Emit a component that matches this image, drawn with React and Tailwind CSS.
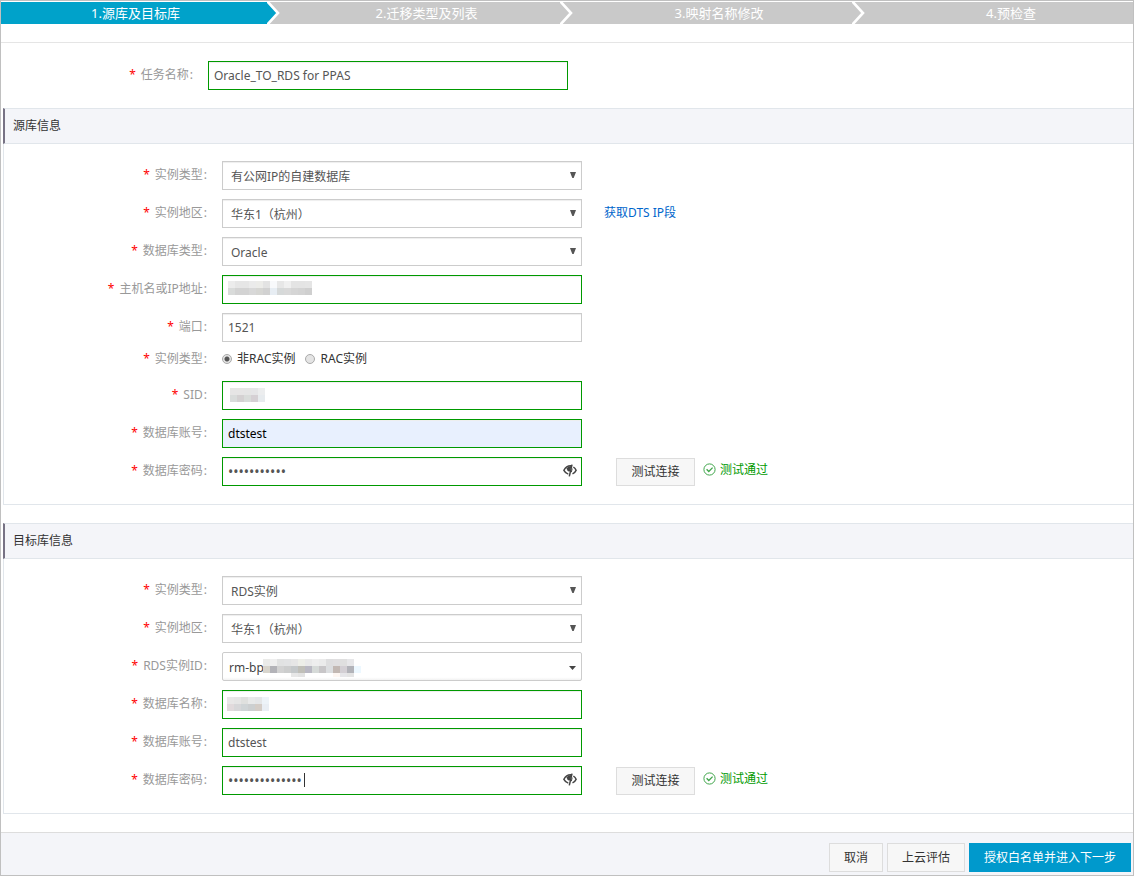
import React from "react";

const steps = [
  { label: "1.源库及目标库", cell: "bg-[#00a2ca] pr-2.5", arrow: "#00a2ca" },
  { label: "2.迁移类型及列表", cell: "bg-[#c9c9c9]", arrow: "#c9c9c9" },
  { label: "3.映射名称修改", cell: "bg-[#c9c9c9]", arrow: "#c9c9c9" },
  { label: "4.预检查", cell: "bg-[#c9c9c9] pl-6" },
];

const hostMask = [
  ["#ececec", "#e6e6e6", "#e6e6e6", "#ebebeb", "#ecece9", "#e3e3e3", "#f8f9fb", "#e7e7e7", "#f0f0f0", "#e4e4e4", "#e4e4e4", "#e5e5e5"],
  ["#d9dbda", "#d3d3d3", "#d3d3d3", "#d8d8d8", "#d6d6d3", "#d1d1d1", "#e7edf3", "#d6d9d9", "#d9d9d9", "#d5d5d5", "#d3d3d3", "#cfcfcf"],
];

const sidMask = [
  ["#e6e5e5", "#e6e5e5", "#e5e5e5", "#e5e5e7", "#ecedee"],
  ["#d9dcdb", "#d4d1d2", "#d9dcda", "#d5d0d4", "#e7ebee"],
];

const rdsMask = [
  ["#ebebe9", "#efefef", "#e1e2e2", "#e2e3e4", "#e6e6e6", "#edeee8", "#e9e9e9", "#eeeeee", "#ebebeb", "#dededf", "#e0dfe0", "#dfdfdf", "#e7e7e9", "transparent"],
  ["#d8d5cd", "#b3b3b8", "#d2d2d2", "#cccdcd", "#c4c8ca", "#c0bfb8", "#b9b8c3", "#d6dad8", "#c8c6c8", "#dcdee0", "#c2b8b3", "#d3cfd4", "#b2b3b9", "#edf8ff"],
  ["transparent", "transparent", "transparent", "transparent", "#e7e7e7", "#e3e3e3", "transparent", "transparent", "transparent", "transparent", "#fdf6f2", "#e6e6e9", "#e4e4e4", "transparent"],
];

const nameMask = [
  ["#e8e7e7", "#e5e5e5", "#dfe0de", "#e8e9e9", "#e4e6e8", "#edf3f8"],
  ["#e1dadc", "#d7d7d9", "#cfd4d6", "#cccfd0", "#d4cdc7", "#e9eef4"],
];

function Mask({ rows, className }) {
  return (
    <div className={`absolute pointer-events-none ${className}`}>
      {rows.map((row, i) => (
        <div key={i} className="flex">
          {row.map((color, j) => (
            <span key={j} className={i === 2 ? "w-[7px] h-1" : "w-[7px] h-[7px]"} style={{ backgroundColor: color }} />
          ))}
        </div>
      ))}
    </div>
  );
}

function EyeIcon() {
  return (
    <svg width="14" height="13" viewBox="0 0 14 13" fill="none" stroke="#444" aria-hidden="true">
      <path d="M8.6 1.8C5 1.4 2.3 3.6.9 6.3c.9 1.7 2.4 3.2 4.4 3.8" strokeWidth="1.5" />
      <path d="M3 5.2C4.4 3 6.2 2 8.6 2L6.8 7.4C5 7.8 4 6.8 4 5z" fill="#444" stroke="none" />
      <path d="M9 .6 6.3 12.4" strokeWidth="1.5" />
      <path d="M8.3 8.2 9.2 4.6" strokeWidth="1" />
      <path d="M10.4 3c1.2.8 2.1 1.9 2.7 3.3-.8 1.6-1.9 2.8-3.6 3.6" strokeWidth="1.5" />
    </svg>
  );
}

function PassIcon() {
  return (
    <svg width="13" height="13" viewBox="0 0 13 13" fill="none" stroke="#3fa54a" aria-hidden="true">
      <circle cx="6.5" cy="6.5" r="5.6" />
      <path d="M3.6 6.3 5.8 8.5 9.6 4.6" strokeWidth="1.3" />
    </svg>
  );
}

function LabelText({ children }) {
  return (
    <>
      <span className="mr-[5px] text-[#ff0000]">*</span>
      {children}
      <span className="pl-px pr-px">:</span>
    </>
  );
}

function RowLabel({ id, children, width = "w-[204px]" }) {
  return (
    <label htmlFor={id} className={`${width} shrink-0 pb-0.5 text-right text-[#999]`}>
      <LabelText>{children}</LabelText>
    </label>
  );
}

function Row({ id, label, children, extra }) {
  return (
    <div className="flex items-center">
      <RowLabel id={id}>{label}</RowLabel>
      <div className="relative ml-3.5 w-[360px]">{children}</div>
      {extra}
    </div>
  );
}

function TextField({ id, tone = "border-[#090]", fill = "bg-white text-[#555]", size = "text-xs", ...props }) {
  return (
    <input
      id={id}
      className={`block h-[29px] w-full border px-[5px] outline-none shadow-[inset_0_1px_1px_#eee] ${tone} ${fill} ${size}`}
      {...props}
    />
  );
}

function SelectField({ id, value }) {
  return (
    <>
      <select id={id} className="block h-[29px] w-full appearance-none border border-[#ccc] bg-white pl-2 pr-6 pt-0.5 text-[#555] outline-none shadow-[inset_0_1px_1px_#eee]">
        <option>{value}</option>
      </select>
      <svg className="absolute right-1.5 top-[11px] pointer-events-none" width="6" height="6" viewBox="0 0 6 6" aria-hidden="true">
        <path d="M0 0h6L3.7 6H2.3z" fill="#555" />
      </svg>
    </>
  );
}

function PasswordField({ id, value, children }) {
  return (
    <>
      <TextField id={id} type="password" size="text-sm" defaultValue={value} />
      <button type="button" aria-label="显示密码" className="absolute right-[5px] top-[7px]">
        <EyeIcon />
      </button>
      {children}
    </>
  );
}

function TestResult() {
  return (
    <>
      <button type="button" className="ml-[34px] h-7 w-[79px] border border-[#ddd] bg-[#f7f7f7] text-[#333]">
        测试连接
      </button>
      <span className="ml-2 flex items-center gap-1 pb-1 text-[#090]">
        <PassIcon />
        测试通过
      </span>
    </>
  );
}

function Section({ title, children }) {
  return (
    <section className="mb-[18px] ml-0.5">
      <h2 className="flex h-9 items-center border-y border-l-2 border-y-[#e1e6eb] border-l-[#777284] bg-[#f4f5f9] pl-2 text-[#333]">
        {title}
      </h2>
      <div className="flex flex-col gap-[9px] border-b border-l border-[#e1e6eb] pb-[18px] pt-[17px]">
        {children}
      </div>
    </section>
  );
}

const radioClass =
  "h-2.5 w-2.5 appearance-none rounded-full border border-[#aaa] bg-[#e4e4e4] checked:bg-[radial-gradient(circle,#555_0_2px,#e4e4e4_3px)]";

export default function App() {
  return (
    <form className="border border-[#c0c0c0] bg-white pt-px text-xs leading-4 font-['Noto_Sans','Noto_Sans_CJK_SC',sans-serif]">
      <ol className="grid grid-cols-[279fr_293fr_292fr_268fr] text-[13px]">
        {steps.map((step) => (
          <li key={step.label} className={`relative flex h-[22px] items-center justify-center text-white ${step.cell}`}>
            {step.label}
            {step.arrow && (
              <svg className="absolute right-0 top-0" width="13" height="22" viewBox="0 0 13 22" aria-hidden="true">
                <path d="M0 0h13v22H0z" fill="#c9c9c9" />
                <path d="M0 0l11 11L0 22z" fill={step.arrow} />
                <path d="M0-1 11 11 0 23" fill="none" stroke="#fff" strokeWidth="2.6" />
              </svg>
            )}
          </li>
        ))}
      </ol>

      <div className="mt-[18px] flex items-center border-t border-[#e5e5e5] py-[18px]">
        <RowLabel id="task-name" width="w-[193px]">任务名称</RowLabel>
        <div className="ml-3.5 w-[360px]">
          <TextField id="task-name" defaultValue="Oracle_TO_RDS for PPAS" />
        </div>
      </div>

      <Section title="源库信息">
        <Row id="src-type" label="实例类型">
          <SelectField id="src-type" value="有公网IP的自建数据库" />
        </Row>
        <Row
          id="src-region"
          label="实例地区"
          extra={<a href="#dts-ip" className="ml-[22px] pb-0.5 text-[#06c]">获取DTS IP段</a>}
        >
          <SelectField id="src-region" value="华东1（杭州）" />
        </Row>
        <Row id="src-engine" label="数据库类型">
          <SelectField id="src-engine" value="Oracle" />
        </Row>
        <Row id="src-host" label="主机名或IP地址">
          <TextField id="src-host" />
          <Mask rows={hostMask} className="left-1.5 top-1.5" />
        </Row>
        <Row id="src-port" label="端口">
          <TextField id="src-port" tone="border-[#ccc]" defaultValue="1521" />
        </Row>
        <div role="radiogroup" aria-labelledby="rac-label" className="mb-[5px] flex h-4 items-center">
          <span id="rac-label" className="w-[204px] shrink-0 text-right text-[#999]">
            <LabelText>实例类型</LabelText>
          </span>
          <div className="ml-3.5 flex gap-2.5 text-[#333]">
            <label className="flex items-center gap-[5px]">
              <input type="radio" name="rac" className={radioClass} defaultChecked />
              非RAC实例
            </label>
            <label className="flex items-center gap-[5px]">
              <input type="radio" name="rac" className={radioClass} />
              RAC实例
            </label>
          </div>
        </div>
        <Row id="src-sid" label="SID">
          <TextField id="src-sid" />
          <Mask rows={sidMask} className="left-2 top-[7px]" />
        </Row>
        <Row id="src-user" label="数据库账号">
          <TextField id="src-user" fill="bg-[#e8f0fe] text-black" defaultValue="dtstest" />
        </Row>
        <Row id="src-password" label="数据库密码" extra={<TestResult />}>
          <PasswordField id="src-password" value="12345678901" />
        </Row>
      </Section>

      <Section title="目标库信息">
        <Row id="dst-type" label="实例类型">
          <SelectField id="dst-type" value="RDS实例" />
        </Row>
        <Row id="dst-region" label="实例地区">
          <SelectField id="dst-region" value="华东1（杭州）" />
        </Row>
        <Row id="dst-rds" label="RDS实例ID">
          <select id="dst-rds" className="block h-[29px] w-full appearance-none rounded-xs border border-[#ccc] bg-linear-to-b from-white from-90% to-[#f2f2f2] pl-1.5 pr-6 pt-0.5 text-[#444] outline-none">
            <option>rm-bp</option>
          </select>
          <Mask rows={rdsMask} className="left-[41px] top-[7px]" />
          <svg className="absolute right-1.5 top-3.5 pointer-events-none" width="7" height="4" viewBox="0 0 7 4" aria-hidden="true">
            <path d="M0 0h7L3.5 4z" fill="#444" />
          </svg>
        </Row>
        <Row id="dst-name" label="数据库名称">
          <TextField id="dst-name" />
          <Mask rows={nameMask} className="left-[5px] top-[7px]" />
        </Row>
        <Row id="dst-user" label="数据库账号">
          <TextField id="dst-user" defaultValue="dtstest" />
        </Row>
        <Row id="dst-password" label="数据库密码" extra={<TestResult />}>
          <PasswordField id="dst-password" value="12345678901234">
            <span className="absolute left-[82px] top-[7px] h-3.5 w-px bg-[#333]" />
          </PasswordField>
        </Row>
      </Section>

      <footer className="flex justify-end gap-1 border-t border-[#ddd] bg-[#f4f5f9] pb-[3px] pr-0.5 pt-2.5">
        <button type="button" className="h-[29px] border border-[#ddd] bg-[#f7f7f7] px-3.5 text-[#333]">取消</button>
        <button type="button" className="h-[29px] border border-[#ddd] bg-[#f7f7f7] px-3.5 text-[#333]">上云评估</button>
        <button type="submit" className="h-[29px] bg-[#09c] px-[15px] text-white">授权白名单并进入下一步</button>
      </footer>
    </form>
  );
}
